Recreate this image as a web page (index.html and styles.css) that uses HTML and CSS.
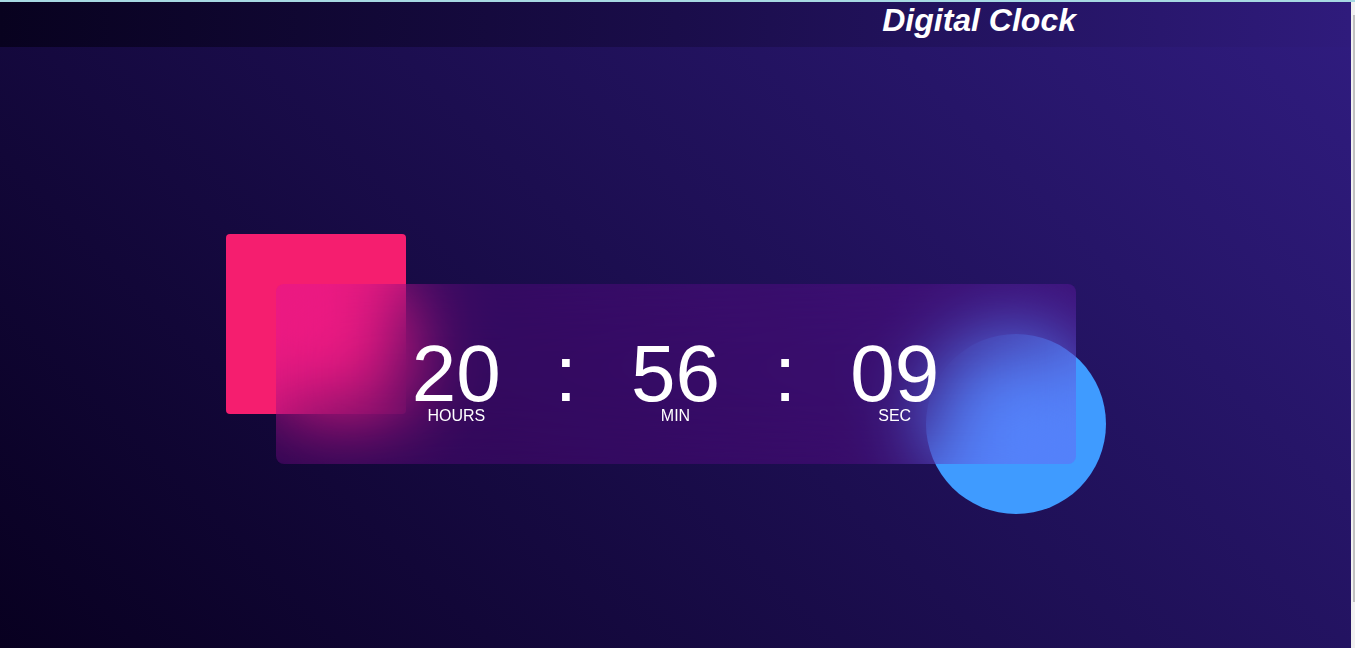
FILE: index.html
```html
<!DOCTYPE html>
<html lang="en">
<head>
<meta charset="utf-8">
<title>Digital Clock</title>
<link rel="stylesheet" href="styles.css">
</head>
<body>
  <div class="page">
    <header class="topbar">
      <h1 class="title">Digital Clock</h1>
    </header>
    <main class="stage">
      <div class="clock-wrap">
        <div class="shape square"></div>
        <div class="shape circle"></div>
        <div class="card">
          <div class="unit">
            <span class="num">20</span>
            <span class="label">HOURS</span>
          </div>
          <span class="colon">:</span>
          <div class="unit">
            <span class="num">56</span>
            <span class="label">MIN</span>
          </div>
          <span class="colon">:</span>
          <div class="unit">
            <span class="num">09</span>
            <span class="label">SEC</span>
          </div>
        </div>
      </div>
    </main>
  </div>
  <div class="scrollbar"><div class="thumb"></div></div>
</body>
</html>
```
FILE: styles.css
```css
html, body {
  margin: 0;
  padding: 0;
}

body {
  height: 648px;
  overflow: hidden;
  display: flex;
  border-top: 2px solid #a7d9e3;
  box-sizing: border-box;
  font-family: "Liberation Sans", Arial, sans-serif;
  color: #ffffff;
}

.page {
  flex: 1;
  display: flex;
  flex-direction: column;
  background: linear-gradient(45deg, #080020 0%, #1c0e50 50%, #301c80 100%);
}

.topbar {
  height: 45px;
  flex: none;
  padding: 0 275px;
  text-align: right;
  background: linear-gradient(to right, #08021f 0%, #1a0d4a 50%, #2f1b7c 100%);
}

.title {
  margin: 0;
  font-size: 32px;
  font-weight: bold;
  font-style: italic;
  line-height: normal;
}

.stage {
  flex: 1;
  display: flex;
  justify-content: center;
  align-items: flex-start;
  padding-top: 237px;
}

.clock-wrap {
  position: relative;
  width: 800px;
  height: 180px;
}

.shape {
  position: absolute;
  width: 180px;
  height: 180px;
}

.square {
  left: -50px;
  top: -50px;
  background: #f51e6f;
  border-radius: 4px;
}

.circle {
  right: -30px;
  bottom: -50px;
  background: #3f9bff;
  border-radius: 50%;
}

.card {
  position: relative;
  width: 800px;
  height: 180px;
  box-sizing: border-box;
  padding-top: 59px;
  border-radius: 8px;
  display: flex;
  justify-content: center;
  align-items: flex-start;
  gap: 54px;
  background: rgba(190, 5, 225, 0.17);
  backdrop-filter: blur(40px);
  -webkit-backdrop-filter: blur(40px);
  overflow: hidden;
}

.unit {
  display: flex;
  flex-direction: column;
  align-items: center;
}

.num, .colon {
  font-size: 80px;
  line-height: 62px;
}

.label {
  margin-top: 2px;
  font-size: 16px;
  line-height: normal;
}

.scrollbar {
  width: 4px;
  flex: none;
  background: #f1f1f1;
  padding-top: 13px;
  box-sizing: border-box;
  display: flex;
  justify-content: flex-end;
}

.thumb {
  width: 2px;
  height: 587px;
  background: #c1c1c1;
}
```
